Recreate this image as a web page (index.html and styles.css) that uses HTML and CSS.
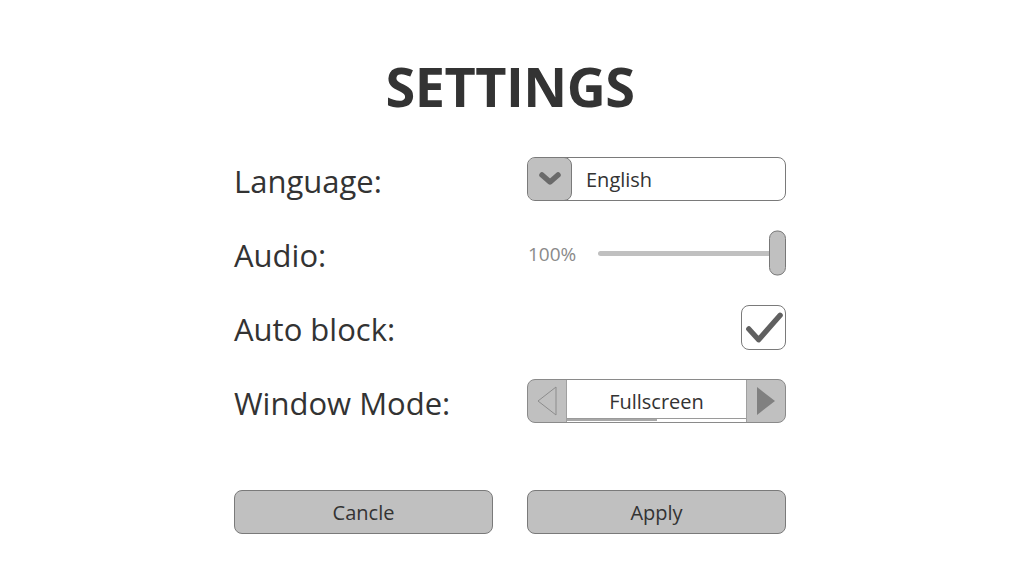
FILE: index.html
```html
<!DOCTYPE html>
<html>
<head>
<meta charset="utf-8">
<link rel="stylesheet" href="styles.css">
</head>
<body>
<main class="settings">
  <h1 class="title">SETTINGS</h1>
  <div class="rows">
    <div class="label">Language:</div>
    <div class="control">
      <div class="dropdown">
        <div class="dd-btn">
          <svg width="26" height="16" viewBox="0 0 26 16"><path d="M5 4 L13 11 L21 4" fill="none" stroke="#6a6a6a" stroke-width="5.5" stroke-linecap="round" stroke-linejoin="round"/></svg>
        </div>
        <div class="dd-value">English</div>
      </div>
    </div>

    <div class="label">Audio:</div>
    <div class="control">
      <div class="slider">
        <span class="slider-val">100%</span>
        <div class="track"><div class="thumb"></div></div>
      </div>
    </div>

    <div class="label">Auto block:</div>
    <div class="control end">
      <div class="checkbox">
        <svg width="44" height="44" viewBox="0 0 44 44"><path d="M7 24 L17 35 L39 10" fill="none" stroke="#606060" stroke-width="5.5" stroke-linecap="round" stroke-linejoin="round"/></svg>
      </div>
    </div>

    <div class="label">Window Mode:</div>
    <div class="control">
      <div class="selector">
        <div class="sel-arrow left">
          <svg width="22" height="30" viewBox="0 0 22 30"><path d="M20 1 L2 15 L20 29 Z" fill="none" stroke="#8c8c8c" stroke-width="1"/></svg>
        </div>
        <div class="sel-mid">
          <div class="sel-text">Fullscreen</div>
          <div class="sel-progress"><div class="sel-fill"></div></div>
        </div>
        <div class="sel-arrow right">
          <svg width="22" height="30" viewBox="0 0 22 30"><path d="M2 1 L20 15 L2 29 Z" fill="#808080"/></svg>
        </div>
      </div>
    </div>
  </div>
  <div class="actions">
    <button class="btn">Cancle</button>
    <button class="btn">Apply</button>
  </div>
</main>
</body>
</html>
```
FILE: styles.css
```css
html, body {
  margin: 0;
  padding: 0;
  background: #ffffff;
}
body {
  font-family: "Open Sans", "Noto Sans", sans-serif;
  color: #333333;
}
.settings {
  width: 552px;
  margin: 0 auto;
  padding-top: 56px;
}
.title {
  margin: 0;
  font-size: 54px;
  line-height: 60px;
  font-weight: 700;
  text-align: center;
  color: #333333;
  letter-spacing: -0.5px;
}
.rows {
  margin-top: 41px;
  display: grid;
  grid-template-columns: 293px 259px;
  grid-auto-rows: 44px;
  row-gap: 30px;
}
.label {
  font-size: 31px;
  line-height: 44px;
  color: #333333;
  display: flex;
  align-items: center;
  padding-top: 4px;
}
.control {
  display: flex;
  align-items: center;
}
.control.end {
  justify-content: flex-end;
}
.dropdown {
  box-sizing: border-box;
  width: 259px;
  height: 44px;
  border: 1px solid #7a7a7a;
  border-radius: 8px;
  display: flex;
  align-items: center;
  overflow: hidden;
}
.dd-btn {
  box-sizing: border-box;
  width: 45px;
  height: 44px;
  margin: -1px 0 -1px -1px;
  background: #c0c0c0;
  border: 1px solid #7a7a7a;
  border-radius: 8px;
  display: flex;
  align-items: center;
  justify-content: center;
}
.dd-value {
  margin-left: 14px;
  font-size: 20px;
  color: #333333;
}
.slider {
  width: 259px;
  height: 44px;
  display: flex;
  align-items: center;
}
.slider-val {
  font-size: 19px;
  color: #8a8a8a;
  width: 70px;
  margin-left: 1px;
  padding-top: 2px;
}
.track {
  position: relative;
  flex: 1;
  height: 5px;
  background: #c0c0c0;
  border-radius: 3px;
}
.thumb {
  position: absolute;
  right: 0;
  top: 50%;
  transform: translateY(-50%);
  box-sizing: border-box;
  width: 17px;
  height: 45px;
  background: #c0c0c0;
  border: 1px solid #777777;
  border-radius: 8px;
}
.checkbox {
  box-sizing: border-box;
  width: 45px;
  height: 45px;
  border: 1px solid #7a7a7a;
  border-radius: 8px;
  display: flex;
  align-items: center;
  justify-content: center;
}
.selector {
  box-sizing: border-box;
  width: 259px;
  height: 44px;
  border: 1px solid #8a8a8a;
  border-radius: 8px;
  background: #c0c0c0;
  display: flex;
  overflow: hidden;
}
.sel-arrow {
  width: 38px;
  display: flex;
  align-items: center;
  justify-content: center;
}
.sel-mid {
  flex: 1;
  background: #ffffff;
  border-left: 1px solid #a0a0a0;
  border-right: 1px solid #a0a0a0;
  display: flex;
  flex-direction: column;
}
.sel-text {
  flex: 1;
  display: flex;
  align-items: center;
  justify-content: center;
  font-size: 20px;
  color: #333333;
  padding-top: 5px;
}
.sel-progress {
  height: 2px;
  border-top: 1px solid #9a9a9a;
  background: #ffffff;
  margin-bottom: 1px;
}
.sel-fill {
  width: 50%;
  height: 100%;
  background: #a8a8a8;
}
.actions {
  margin-top: 67px;
  display: flex;
  justify-content: space-between;
}
.btn {
  box-sizing: border-box;
  width: 259px;
  height: 44px;
  background: #c0c0c0;
  border: 1px solid #7a7a7a;
  border-radius: 8px;
  font-family: "Open Sans", "Noto Sans", sans-serif;
  font-size: 20px;
  color: #333333;
  padding: 0;
}
```
